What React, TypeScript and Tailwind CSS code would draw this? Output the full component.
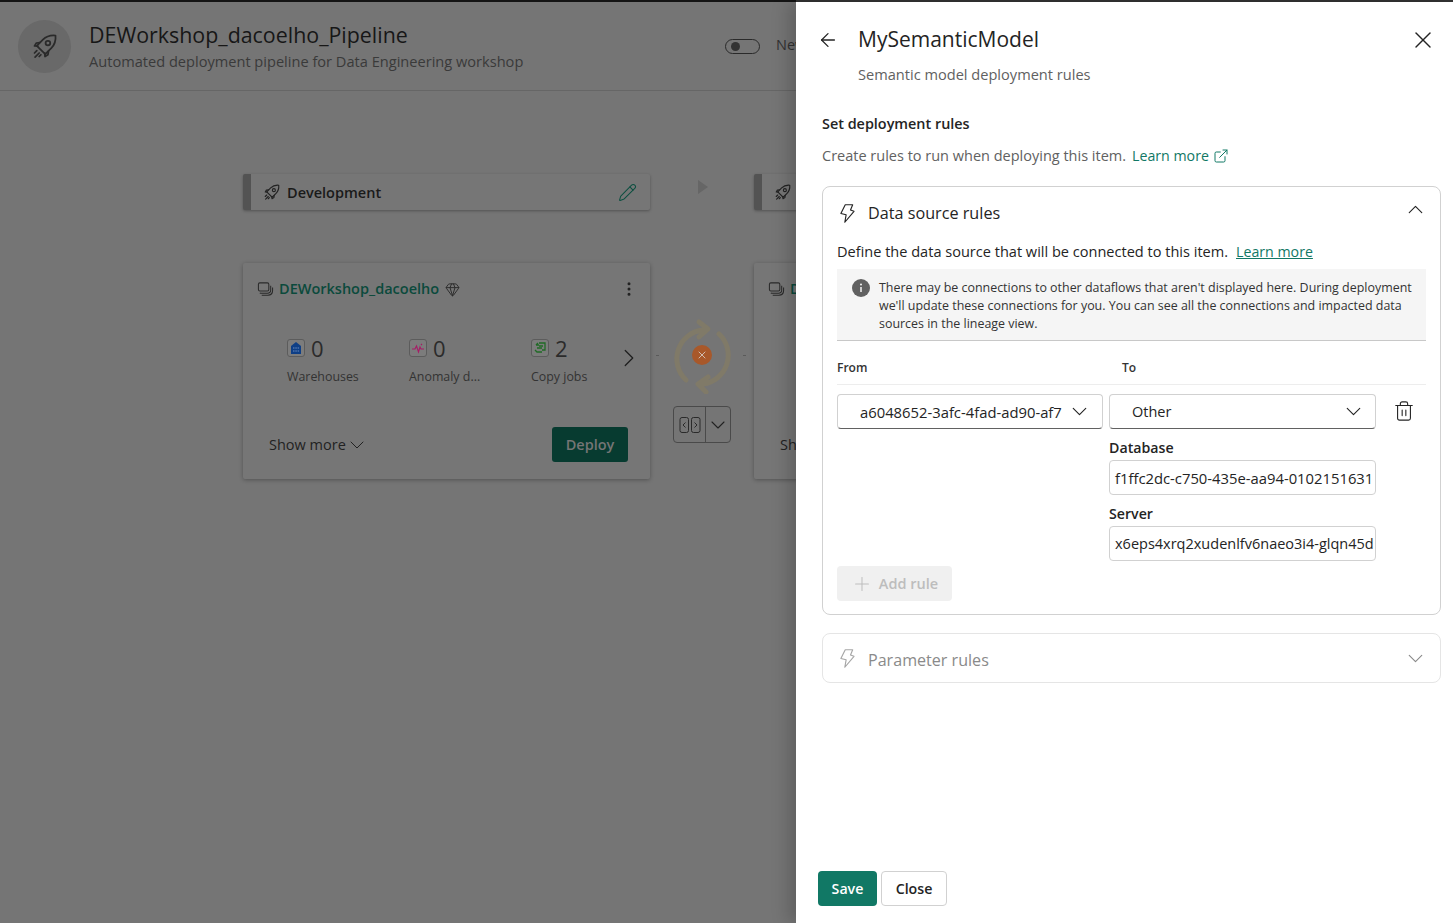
import React from 'react';
import { ArrowLeft, ChevronDown, ChevronRight, ChevronUp, ExternalLink, EllipsisVertical, Gem, Pencil, Plus, Trash2, X } from 'lucide-react';

const Rocket = ({ className }: { className: string }): React.ReactElement => (
  <svg viewBox="0 0 24 24" fill="none" stroke="currentColor" strokeWidth="1.5" strokeLinejoin="round" strokeLinecap="round" className={className}>
    <path d="M21 3c.4 4-.8 8-3.600 10.800l-5.200 5.200-7.200-7.200 5.200-5.200C13 3.800 17 2.600 21 3Z" />
    <circle cx="14.500" cy="9.500" r="2" />
    <path d="M7.500 9 4.500 9.500 3 12l2.800.200M15 16.500l-.500 3L12 21l-.2-2.800" />
    <path d="M5 16l-2 2M7 18l-3.500 3.500M8.500 19.500l-1.500 1.500" />
  </svg>
);

const Bolt = ({ className }: { className: string }): React.ReactElement => (
  <svg viewBox="0 0 20 24" fill="none" stroke="currentColor" strokeWidth="1.300" strokeLinejoin="round" className={className}>
    <path d="M8 2h8.500l-2.500 6 4 1.500L7.500 22 9 13.500 3 12Z" />
  </svg>
);

const Layers = ({ className }: { className: string }): React.ReactElement => (
  <svg viewBox="0 0 18 18" fill="none" stroke="currentColor" strokeWidth="1.100" className={className}>
    <rect x="1.500" y="2" width="11" height="8.500" rx="1.500" />
    <path d="M3 12.500c.5.500 1 .5 2 .5h6c2.500 0 3.500-1.500 3.500-3.500V5" />
    <path d="M5 15h6.500c3 0 5-2 5-5V7" />
  </svg>
);

const Metric = ({ value, label, children }: { value: string; label: string; children: React.ReactNode }): React.ReactElement => (
  <div className="w-[122px] shrink-0">
    <div className="flex h-6 items-center gap-[6px]">
      <span className="flex h-[18px] w-[18px] items-center justify-center rounded-[3px] border border-[#5c5c5c] bg-[#7c7c7c]">{children}</span>
      <span className="text-[22px] leading-6 text-[#2b2b2b]">{value}</span>
    </div>
    <div className="mt-[9px] text-[12.400px] leading-4 text-[#333333]">{label}</div>
  </div>
);

const StageHeader = ({ name }: { name?: string }): React.ReactElement => (
  <div className="flex h-9 w-[407px] shrink-0 items-center rounded-[2px] border-l-[8px] border-[#535353] bg-[#767676] pl-[12px] pr-[13px] shadow-[0_1px_3px_rgba(0,0,0,0.3)]">
    <Rocket className="h-[18px] w-[18px] shrink-0 text-[#222222]" />
    {name && <span className="ml-[6px] pt-[1px] text-[14.500px] font-semibold text-[#1a1a1a]">{name}</span>}
    {name && <Pencil className="ml-auto h-[19px] w-[19px] text-[#0c4f40]" strokeWidth={1.300} />}
  </div>
);

const App = (): React.ReactElement => (
  <div className="flex h-[923px] w-[1453px] flex-col overflow-hidden bg-[#757575] font-['Open_Sans',sans-serif]">
    <div className="flex h-[2px] shrink-0">
      <div className="w-[796px] bg-[#141414]" />
      <div className="flex-1 bg-[#333333]" />
    </div>
    <div className="flex min-h-0 flex-1">
      <main className="w-[796px] shrink-0 overflow-hidden">
        <header className="flex h-[89px] items-center border-b border-[#666666] pl-[18px]">
          <div className="flex h-[53px] w-[53px] shrink-0 items-center justify-center rounded-full bg-[#696969]">
            <Rocket className="h-[28px] w-[28px] text-[#2a2a2a]" />
          </div>
          <div className="ml-[18px] w-[636px] shrink-0">
            <div className="text-[21.400px] font-medium leading-[30px] text-[#171717]">DEWorkshop_dacoelho_Pipeline</div>
            <div className="text-[14.600px] leading-[22px] text-[#3a3a3a]">Automated deployment pipeline for Data Engineering workshop</div>
          </div>
          <div className="flex h-[15px] w-[35px] shrink-0 items-center rounded-full border border-[#2a2a2a] pl-[5px]">
            <span className="h-[9px] w-[9px] rounded-full bg-[#333333]" />
          </div>
          <span className="ml-[16px] shrink-0 pb-[2px] text-[14.500px] text-[#333333]">New</span>
        </header>

        <div className="mt-[83px] flex items-center pl-[243px]">
          <StageHeader name="Development" />
          <div className="mb-[10px] flex w-[104px] shrink-0 justify-center">
            <span className="ml-[2px] h-0 w-0 border-y-[7px] border-l-[10px] border-y-transparent border-l-[#666666]" />
          </div>
          <StageHeader />
        </div>

        <div className="mt-[53px] flex pl-[243px]">
          <section className="h-[216px] w-[407px] shrink-0 rounded-[2px] bg-[#767676] shadow-[0_1px_4px_rgba(0,0,0,0.3)]">
            <div className="flex h-[52px] items-center pl-[14px] pr-[12px]">
              <Layers className="h-[17px] w-[17px] text-[#2a2a2a]" />
              <span className="ml-[5px] text-[14.500px] font-semibold text-[#0b4a3c]">DEWorkshop_dacoelho</span>
              <Gem className="ml-[6px] h-[15px] w-[15px] text-[#2a2a2a]" strokeWidth={1.500} />
              <EllipsisVertical className="ml-auto h-[18px] w-[18px] text-[#222222]" />
            </div>
            <div className="mt-[21px] flex items-start pl-[44px]">
              <Metric value="0" label="Warehouses">
                <svg viewBox="0 0 14 14" className="h-[14px] w-[14px]"><path d="M7 1 2 5v8h10V5Z" fill="#0f3f86" /><path d="M4 7h1.500M6.300 7h1.500M8.600 7h1.500M4 10h1.500M6.300 10h1.500M8.600 10h1.500" stroke="#6e8fc0" strokeWidth="1" /></svg>
              </Metric>
              <Metric value="0" label="Anomaly d...">
                <svg viewBox="0 0 14 14" fill="none" className="h-[14px] w-[14px]"><path d="M1 8h3l1.500-3L7.500 11 9 6l1 2h3M10 3l1 1" stroke="#a81a66" strokeWidth="1.100" /></svg>
              </Metric>
              <Metric value="2" label="Copy jobs">
                <svg viewBox="0 0 14 14" fill="none" className="h-[14px] w-[14px]"><path d="M6 2h6v7H9M3 4l2-2M3 4h3M2 9l2 2h5M4 7h5M6 5h4" stroke="#1f6b25" strokeWidth="1.300" /></svg>
              </Metric>
              <ChevronRight className="-ml-[39px] mt-[7px] h-[30px] w-[30px] shrink-0 text-[#1f1f1f]" strokeWidth={1} />
            </div>
            <div className="mt-[42px] flex items-center justify-between pl-[26px] pr-[22px]">
              <div className="flex items-center pt-[1px] text-[14.500px] text-[#222222]">
                Show more
                <ChevronDown className="-ml-[1px] h-[24px] w-[24px]" strokeWidth={1} />
              </div>
              <div className="flex h-[35px] w-[76px] items-center justify-center rounded-[3px] bg-[#073b30] text-[14.500px] font-semibold text-[#757575]">Deploy</div>
            </div>
          </section>

          <div className="flex w-[104px] shrink-0 flex-col items-center pt-[53px]">
            <div className="relative h-[78px] w-[78px]">
              <svg viewBox="0 0 78 78" fill="none" stroke="#807a68" strokeWidth="5" strokeLinecap="round" strokeLinejoin="round" className="h-full w-full">
                <path d="M23 64A29 29 0 0 1 40 14M36 6l9 7-9 8" />
                <path d="M56 18A29 29 0 0 1 40 68M45 61l-10 7 8 8" />
              </svg>
              <span className="absolute left-[29px] top-[29px] flex h-5 w-5 items-center justify-center rounded-full bg-[#a8582a]">
                <X className="h-[12px] w-[12px] text-[#d0bdb0]" strokeWidth={2} />
              </span>
              <span className="absolute -left-[7px] top-[39px] h-px w-[3px] bg-[#5a5a5a]" />
              <span className="absolute -right-[5px] top-[39px] h-px w-[3px] bg-[#5a5a5a]" />
            </div>
            <div className="mt-[12px] flex h-[37px] w-[58px] rounded-[4px] border border-[#4a4a4a]">
              <div className="flex w-[34px] items-center justify-center border-r border-[#4a4a4a]">
                <svg viewBox="0 0 24 18" fill="none" stroke="#2a2a2a" strokeWidth="1" className="h-[18px] w-[24px]">
                  <rect x="2" y="1.500" width="8.500" height="15" rx="2" />
                  <rect x="13.500" y="1.500" width="8.500" height="15" rx="2" />
                  <path d="M7.500 6.500 5 9l2.500 2.500M16.500 6.500 19 9l-2.500 2.500" />
                </svg>
              </div>
              <div className="flex flex-1 items-center justify-center">
                <ChevronDown className="h-[24px] w-[24px] text-[#222222]" strokeWidth={1.100} />
              </div>
            </div>
          </div>

          <section className="h-[216px] w-[407px] shrink-0 rounded-[2px] bg-[#767676] shadow-[0_1px_4px_rgba(0,0,0,0.3)]">
            <div className="flex h-[52px] items-center pl-[14px]">
              <Layers className="h-[17px] w-[17px] text-[#2a2a2a]" />
              <span className="ml-[5px] text-[14.500px] font-semibold text-[#0b4a3c]">DEWorkshop</span>
            </div>
            <div className="mt-[119px] pl-[26px] text-[14.500px] text-[#222222]">Show more</div>
          </section>
        </div>
      </main>

      <aside className="flex min-w-0 flex-1 flex-col bg-white pl-[26px] pr-[12px] shadow-[-8px_0_16px_rgba(0,0,0,0.18)]">
        <div className="flex h-[62px] shrink-0 items-start pt-[21px]">
          <ArrowLeft className="-ml-[5px] mt-[6px] h-[22px] w-[22px] shrink-0 text-[#242424]" strokeWidth={1.400} />
          <h1 className="ml-[19px] -mt-[1px] text-[21px] leading-[34px] text-[#242424]">MySemanticModel</h1>
          <X className="ml-auto mr-[4px] mt-[3px] h-[28px] w-[28px] text-[#242424]" strokeWidth={1.200} />
        </div>
        <p className="pl-[36px] text-[14.600px] leading-[20px] text-[#616161]">Semantic model deployment rules</p>
        <h2 className="mt-[30px] text-[14.400px] font-semibold leading-[20px] text-[#242424]">Set deployment rules</h2>
        <p className="mt-[12px] flex h-5 items-center text-[14.500px] text-[#616161]">
          Create rules to run when deploying this item.
          <span className="ml-[6px] text-[14.200px] text-[#117865]">Learn more</span>
          <ExternalLink className="ml-[4px] h-[16px] w-[16px] text-[#117865]" strokeWidth={1.500} />
        </p>

        <section className="mt-[20px] h-[429px] shrink-0 rounded-[8px] border border-[#d1d1d1] px-[14px]">
          <div className="flex h-[52px] items-center">
            <Bolt className="ml-[1px] h-[21px] w-[18px] text-[#242424]" />
            <span className="ml-[12px] text-[16.200px] text-[#242424]">Data source rules</span>
            <ChevronUp className="ml-auto -mr-[2px] -mt-[7px] h-[25px] w-[25px] text-[#242424]" strokeWidth={1.100} />
          </div>
          <p className="mt-[2px] h-5 text-[14.550px] leading-[20px] text-[#242424]">
            Define the data source that will be connected to this item.
            <span className="ml-[8px] text-[14.200px] text-[#117865] underline">Learn more</span>
          </p>
          <div className="mt-[8px] flex h-[72px] border-b border-[#c8c8c8] bg-[#f5f5f5] pl-[15px] pr-[10px] pt-[10px]">
            <svg viewBox="0 0 18 18" className="h-[18px] w-[18px] shrink-0">
              <circle cx="9" cy="9" r="9" fill="#616161" />
              <path d="M9 8v5" stroke="#f5f5f5" strokeWidth="1.500" />
              <circle cx="9" cy="5.500" r="1" fill="#f5f5f5" />
            </svg>
            <p className="ml-[9px] text-[12.450px] leading-[18px] text-[#333333]">There may be connections to other dataflows that aren't displayed here. During deployment we'll update these connections for you. You can see all the connections and impacted data sources in the lineage view.</p>
          </div>
          <div className="flex h-[44px] items-end border-b border-[#ededed] pb-[7px] text-[12px] font-semibold text-[#333333]">
            <span className="w-[285px]">From</span>
            <span>To</span>
          </div>
          <div className="mt-[9px] flex items-start">
            <div className="flex h-[35px] w-[266px] items-center rounded-[4px] border border-[#d1d1d1] border-b-[#616161] pl-[22px] pr-[10px] text-[14.800px] text-[#242424]">
              <span className="overflow-hidden whitespace-nowrap pt-[1px]">a6048652-3afc-4fad-ad90-af7</span>
              <ChevronDown className="ml-auto h-[25px] w-[25px] shrink-0" strokeWidth={1.100} />
            </div>
            <div className="ml-[6px] w-[267px] shrink-0">
              <div className="flex h-[35px] items-center rounded-[4px] border border-[#d1d1d1] border-b-[#616161] pl-[22px] pr-[9px] text-[14.500px] text-[#242424]">
                <span className="pt-[1px]">Other</span>
                <ChevronDown className="ml-auto h-[25px] w-[25px]" strokeWidth={1.100} />
              </div>
              <div className="mt-[9px] text-[14.200px] font-semibold leading-[20px] text-[#242424]">Database</div>
              <div className="mt-[2px] flex h-[35px] items-center overflow-hidden whitespace-nowrap rounded-[4px] border border-[#d1d1d1] pl-[5px] pt-[1px] text-[14.800px] text-[#242424]">f1ffc2dc-c750-435e-aa94-0102151631</div>
              <div className="mt-[9px] text-[14.200px] font-semibold leading-[20px] text-[#242424]">Server</div>
              <div className="mt-[2px] flex h-[35px] items-center overflow-hidden whitespace-nowrap rounded-[4px] border border-[#d1d1d1] pl-[5px] pt-[1px] text-[14.500px] text-[#242424]">x6eps4xrq2xudenlfv6naeo3i4-glqn45d</div>
            </div>
            <Trash2 className="ml-[17px] mt-[6px] h-[22px] w-[22px] shrink-0 text-[#242424]" strokeWidth={1.200} />
          </div>
          <div className="mt-[5px] flex h-[35px] w-[115px] items-center justify-center gap-[6px] rounded-[4px] bg-[#f0f0f0] text-[14.500px] font-semibold text-[#bdbdbd]">
            <Plus className="h-[22px] w-[22px]" strokeWidth={1.100} />
            Add rule
          </div>
        </section>

        <section className="mt-[18px] flex h-[50px] shrink-0 items-center rounded-[8px] border border-[#e5e5e5] px-[14px] pt-[4px] text-[#8a8a8a]">
          <Bolt className="ml-[1px] -mt-[4px] h-[21px] w-[18px] text-[#a6a6a6]" />
          <span className="ml-[12px] text-[16.100px]">Parameter rules</span>
          <ChevronDown className="ml-auto -mr-[2px] -mt-[3px] h-[25px] w-[25px]" strokeWidth={1.100} />
        </section>

        <div className="mt-auto mb-[17px] flex gap-[4px]">
          <div className="-ml-[4px] flex h-[35px] w-[59px] items-center justify-center rounded-[4px] bg-[#117865] pt-[1px] text-[14.200px] font-semibold text-white">Save</div>
          <div className="flex h-[35px] w-[66px] items-center justify-center rounded-[4px] border border-[#d1d1d1] pt-[1px] text-[14.200px] font-semibold text-[#242424]">Close</div>
        </div>
      </aside>
    </div>
  </div>
);

export default App;
